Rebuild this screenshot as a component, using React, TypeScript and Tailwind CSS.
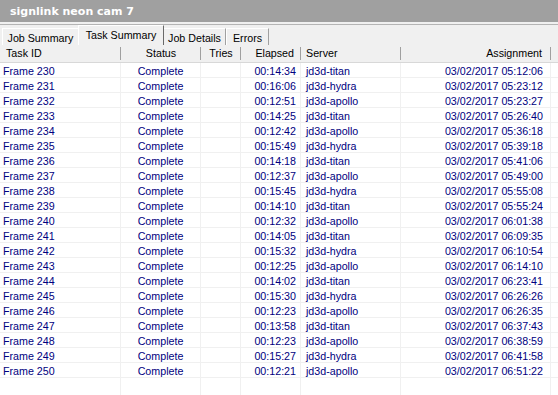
import React from "react";

const rows: [string, string, string, string][] = [
  ["230", "00:14:34", "jd3d-titan", "05:12:06"],
  ["231", "00:16:06", "jd3d-hydra", "05:23:12"],
  ["232", "00:12:51", "jd3d-apollo", "05:23:27"],
  ["233", "00:14:25", "jd3d-titan", "05:26:40"],
  ["234", "00:12:42", "jd3d-apollo", "05:36:18"],
  ["235", "00:15:49", "jd3d-hydra", "05:39:18"],
  ["236", "00:14:18", "jd3d-titan", "05:41:06"],
  ["237", "00:12:37", "jd3d-apollo", "05:49:00"],
  ["238", "00:15:45", "jd3d-hydra", "05:55:08"],
  ["239", "00:14:10", "jd3d-titan", "05:55:24"],
  ["240", "00:12:32", "jd3d-apollo", "06:01:38"],
  ["241", "00:14:05", "jd3d-titan", "06:09:35"],
  ["242", "00:15:32", "jd3d-hydra", "06:10:54"],
  ["243", "00:12:25", "jd3d-apollo", "06:14:10"],
  ["244", "00:14:02", "jd3d-titan", "06:23:41"],
  ["245", "00:15:30", "jd3d-hydra", "06:26:26"],
  ["246", "00:12:23", "jd3d-apollo", "06:26:35"],
  ["247", "00:13:58", "jd3d-titan", "06:37:43"],
  ["248", "00:12:23", "jd3d-apollo", "06:38:59"],
  ["249", "00:15:27", "jd3d-hydra", "06:41:58"],
  ["250", "00:12:21", "jd3d-apollo", "06:51:22"],
];

const grid = "grid grid-cols-[121px_80px_40px_60px_100px_150px_1fr]";

function HCell({ children, cls }: { children?: React.ReactNode; cls: string }) {
  return (
    <div className={`relative flex items-center h-full ${cls}`}>
      {children}
      <span className="absolute right-0 top-[2px] bottom-[2px] w-px bg-[#a0a0a0]" />
    </div>
  );
}

function Tab({ label, active, w }: { label: string; active?: boolean; w: string }) {
  if (active) {
    return (
      <div
        className={`${w} h-[20px] self-end flex items-start justify-center pt-[4px] bg-[#f0f0f0] border-l border-t border-white border-r border-r-[#696969] relative z-10 -mx-[1px]`}
      >
        {label}
      </div>
    );
  }
  return (
    <div
      className={`${w} h-[17px] self-end flex items-start justify-center pt-[4px] bg-[#f0f0f0] border-l border-t border-white border-r border-r-[#a0a0a0]`}
    >
      {label}
    </div>
  );
}

const cell = "flex items-start pt-[3px] border-r border-[#f0f0f0]";

export default function App() {
  return (
    <div
      className="w-[558px] h-[395px] overflow-hidden bg-white text-[10.7px] leading-none text-black"
      style={{ fontFamily: '"Liberation Sans", Arial, sans-serif' }}
    >
      <div className="h-[22px] bg-[#a0a0a0] flex items-center pl-[10px]">
        <span
          className="text-white font-bold text-[11px]"
          style={{ fontFamily: '"DejaVu Sans", Verdana, sans-serif' }}
        >
          signlink neon cam 7
        </span>
      </div>
      <div className="h-[2px] bg-[#f0f0f0]" />
      <div className="h-px bg-[#b4b4b4]" />
      <div className="h-[20px] bg-[#f0f0f0] flex items-end pl-[2px]">
        <Tab label="Job Summary" w="w-[77px]" />
        <Tab label="Task Summary" w="w-[86px]" active />
        <Tab label="Job Details" w="w-[63px]" />
        <Tab label="Errors" w="w-[43px]" />
      </div>
      <div className={`${grid} h-[18px] bg-[#f0f0f0] border-b border-[#d8d8d8]`}>
        <HCell cls="pl-[6px]">Task ID</HCell>
        <HCell cls="justify-center">Status</HCell>
        <HCell cls="justify-center">Tries</HCell>
        <HCell cls="justify-end pr-[7px]">Elapsed</HCell>
        <HCell cls="pl-[5px]">Server</HCell>
        <HCell cls="justify-end pr-[9px]">Assignment</HCell>
        <div />
      </div>
      <div className="relative">
        {rows.map(([f, el, srv, t]) => (
          <div key={f} className={`${grid} h-[15px] border-b border-[#f0f0f0] text-[#000080]`}>
            <div className={`${cell} pl-[3px]`}>Frame {f}</div>
            <div className={`${cell} justify-center`}>Complete</div>
            <div className="border-r border-[#f0f0f0]" />
            <div className={`${cell} justify-end pr-[4px]`}>{el}</div>
            <div className={`${cell} pl-[5px]`}>{srv}</div>
            <div className={`${cell} justify-end pr-[7px]`}>03/02/2017 {t}</div>
            <div />
          </div>
        ))}
        <div className={`${grid} h-[40px]`}>
          <div className="border-r border-[#f0f0f0]" />
          <div className="border-r border-[#f0f0f0]" />
          <div className="border-r border-[#f0f0f0]" />
          <div className="border-r border-[#f0f0f0]" />
          <div className="border-r border-[#f0f0f0]" />
          <div className="border-r border-[#f0f0f0]" />
          <div />
        </div>
      </div>
    </div>
  );
}
